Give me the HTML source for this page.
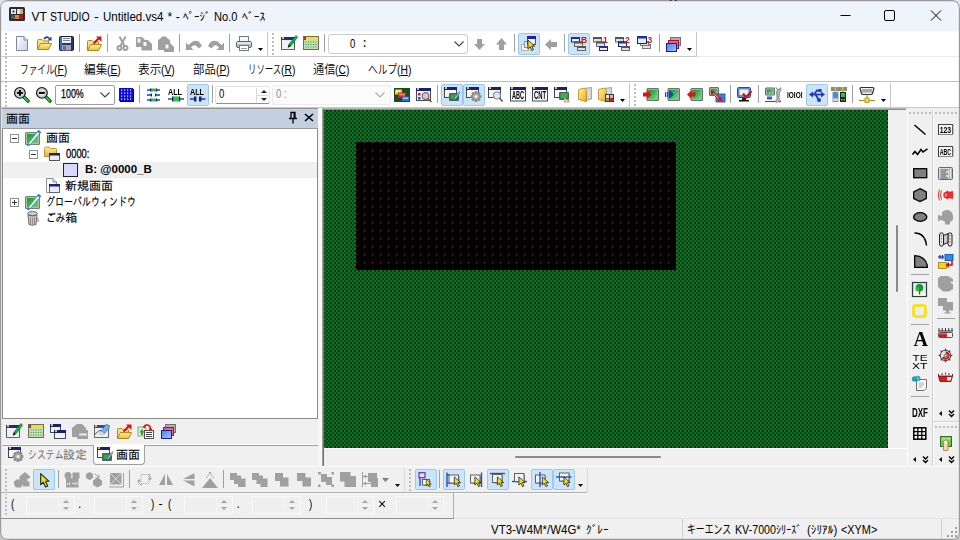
<!DOCTYPE html>
<html lang="ja"><head><meta charset="utf-8"><title>VT STUDIO</title>
<style>
html,body{margin:0;padding:0;}
body{width:960px;height:540px;overflow:hidden;background:#fff;position:relative;font-family:"Liberation Sans","Noto Sans CJK JP",sans-serif;}
#w{position:absolute;left:0;top:0;width:960px;height:540px;overflow:hidden;}
#w div{position:absolute;}
.t{white-space:nowrap;line-height:1;}
.g{white-space:nowrap;line-height:1;font-family:"Liberation Sans","IPAGothic","Noto Sans CJK JP",sans-serif;}
.k{white-space:nowrap;line-height:1;font-family:"Liberation Sans","IPAGothic","Noto Sans CJK JP",sans-serif;-webkit-text-stroke:0.15px currentColor;}
.i{position:absolute;overflow:visible;}
.it{will-change:transform;}
u{text-decoration:underline;text-underline-offset:1px;}
</style></head><body><div id="w">
<div style="left:0px;top:0px;width:960px;height:540px;background:#f0f0f0;"></div>
<div style="left:0px;top:0px;width:960px;height:31px;background:#eff3fb;"></div>
<svg class="i" style="left:9px;top:7px" width="16" height="14" viewBox="0 0 16 14"><rect x="0" y="0" width="16" height="14" rx="1.5" fill="#2c2c2c"/><rect x="2" y="2" width="5" height="5" fill="#e8eef8"/><rect x="3.5" y="3.5" width="2" height="2" fill="#334"/><rect x="8" y="2" width="3" height="5" fill="#d8e8f0"/><rect x="11" y="2" width="3" height="5" fill="#e0a080"/><rect x="2" y="8" width="4" height="4" fill="#5e544c"/><rect x="6" y="8" width="4" height="4" fill="#c88848"/><rect x="10" y="8" width="4" height="4" fill="#b01c1c"/></svg>
<div class="g" style="left:31.5px;top:11px;font-size:12px;color:#000;transform:scaleX(1);transform-origin:0 0;">VT</div>
<div class="g" style="left:49.7px;top:11px;font-size:12px;color:#000;transform:scaleX(0.873);transform-origin:0 0;">STUDIO</div>
<div class="g" style="left:94.4px;top:11px;font-size:12px;color:#000;transform:scaleX(1.2);transform-origin:0 0;">-</div>
<div class="g" style="left:102.6px;top:11px;font-size:12px;color:#000;transform:scaleX(0.965);transform-origin:0 0;">Untitled.vs4</div>
<div class="g" style="left:167.4px;top:11px;font-size:12px;color:#000;transform:scaleX(1);transform-origin:0 0;">*</div>
<div class="g" style="left:175.7px;top:11px;font-size:12px;color:#000;transform:scaleX(1);transform-origin:0 0;">-</div>
<div class="g" style="left:183.2px;top:11px;font-size:12px;color:#000;transform:scaleX(0.91);transform-origin:0 0;">ﾍﾟｰｼﾞ</div>
<div class="g" style="left:214.4px;top:11px;font-size:12px;color:#000;transform:scaleX(0.925);transform-origin:0 0;">No.0</div>
<div class="g" style="left:242.1px;top:11px;font-size:12px;color:#000;transform:scaleX(0.97);transform-origin:0 0;">ﾍﾞｰｽ</div>
<svg class="i" style="left:838px;top:9px" width="110" height="14" viewBox="0 0 110 14"><path d="M2.5 6.5h10" stroke="#000" stroke-width="1" fill="none"/><rect x="46.5" y="1.5" width="10" height="10" rx="1.5" fill="none" stroke="#000" stroke-width="1"/><path d="M93 1.5l10 10M103 1.5l-10 10" stroke="#000" stroke-width="1" fill="none"/></svg>
<div style="left:1px;top:31px;width:958px;height:26px;background:#fff;"></div>
<div style="left:1px;top:56px;width:958px;height:1px;background:#ececec;"></div>
<div style="left:2px;top:56px;width:695px;height:1px;background:#c8c8c8;"></div>
<div style="left:1px;top:57px;width:958px;height:25px;background:#fff;"></div>
<div style="left:1px;top:81px;width:958px;height:1px;background:#c0c0c0;"></div>
<div style="left:1px;top:82px;width:958px;height:26px;background:#fff;"></div>
<div style="left:1px;top:107px;width:958px;height:1px;background:#c8c8c8;"></div>
<div style="left:5px;top:33px;width:2px;height:74px;background-image:repeating-linear-gradient(to bottom,#bdbdbd 0,#bdbdbd 2px,transparent 2px,transparent 4px);"></div>
<svg class="i" style="left:16px;top:36px" width="12" height="15" viewBox="0 0 12 15"><defs><linearGradient id="gnew" x1="0" y1="0" x2="1" y2="1"><stop offset="0" stop-color="#fff"/><stop offset="1" stop-color="#c8d4e8"/></linearGradient></defs><path d="M0.5 0.5H8L11.5 4V14.5H0.5Z" fill="url(#gnew)" stroke="#808898"/><path d="M8 0.5V4H11.5" fill="#e8ecf4" stroke="#808898"/></svg>
<svg class="i" style="left:36px;top:35px" width="16" height="16" viewBox="0 0 16 16"><defs><linearGradient id="gfo1" x1="0" y1="0" x2="0" y2="1"><stop offset="0" stop-color="#fff0a0"/><stop offset="1" stop-color="#f0c030"/></linearGradient></defs><path d="M1.5 14.5V5.5Q1.5 4.5 2.5 4.5H6L7.5 6H12.5V8" fill="#f8e080" stroke="#b08820"/><path d="M1.5 14.5L4.5 8.5H15.5L12.5 14.5Z" fill="url(#gfo1)" stroke="#b08820"/><path d="M8 4Q10.5 0.5 13.5 3.5" fill="none" stroke="#1a3a9c" stroke-width="1.6"/><path d="M11.5 5.5L15.5 5.5L15.5 1.5Z" fill="#1a3a9c"/></svg>
<svg class="i" style="left:59px;top:36px" width="15" height="15" viewBox="0 0 15 15"><rect x="0.5" y="0.5" width="14" height="14" rx="1" fill="#24347c" stroke="#141c54"/><rect x="3" y="1" width="9" height="6" fill="#f0f0f0"/><path d="M4 2.5h7M4 4.5h7" stroke="#888" stroke-width="1"/><rect x="3" y="9" width="9" height="5.5" fill="#a0a4b0"/><rect x="4" y="10" width="3" height="4" fill="#70747c"/><rect x="1" y="1" width="2" height="13" fill="#4a6ab8"/></svg>
<div style="left:79px;top:34px;width:1px;height:18px;background:#a0a0a0;"></div>
<svg class="i" style="left:86px;top:36px" width="16" height="16" viewBox="0 0 16 16"><defs><linearGradient id="gfo2" x1="0" y1="0" x2="0" y2="1"><stop offset="0" stop-color="#fff0a0"/><stop offset="1" stop-color="#f0c030"/></linearGradient></defs><path d="M1.5 14.5V5.5Q1.5 4.5 2.5 4.5H6L7.5 6H12.5V8" fill="#f8e080" stroke="#b08820"/><path d="M1.5 14.5L4.5 8.5H15.5L12.5 14.5Z" fill="url(#gfo2)" stroke="#b08820"/><path d="M7.5 7.5L13 2" stroke="#e01010" stroke-width="2.2"/><path d="M10 0.5H15.5V6Z" fill="#e01010"/></svg>
<div style="left:107px;top:34px;width:1px;height:18px;background:#a0a0a0;"></div>
<svg class="i" style="left:117px;top:36px" width="11" height="15" viewBox="0 0 11 15"><g fill="none" stroke="#a0a0a0" stroke-width="2"><path d="M2.5 0.5L7.5 10M8.5 0.5L3.5 10"/><circle cx="2.5" cy="12" r="2"/><circle cx="8.5" cy="12" r="2"/></g></svg>
<svg class="i" style="left:136px;top:37px" width="16" height="14" viewBox="0 0 16 14"><path d="M0 0H6L9 3V10H0Z" fill="#a0a0a0"/><path d="M1.500 1.500H4.500V5.500H1.500Z" fill="#f4f4f4"/><path d="M5.500 3H12L16 7V13.500H5.500Z" fill="#a0a0a0"/><path d="M7.500 5H10.500V9H7.500Z" fill="#f4f4f4"/></svg>
<svg class="i" style="left:158px;top:36px" width="16" height="16" viewBox="0 0 16 16"><path d="M0 5Q0 3 2 3L4 0.5H8L10 3Q12 3 12 5V14H0Z" fill="#a0a0a0"/><path d="M6 7H12L16 11V16H6Z" fill="#a0a0a0"/><path d="M7.500 8.500H10.5V12.500H7.500Z" fill="#f4f4f4"/></svg>
<div style="left:179px;top:34px;width:1px;height:18px;background:#a0a0a0;"></div>
<svg class="i" style="left:186px;top:39px" width="16" height="11" viewBox="0 0 16 11"><path d="M0 3.500V11H7.5L5 8.500Q9 3.500 12.500 9.500L16 7Q11 -3 2.500 6Z" fill="#a0a0a0"/></svg>
<svg class="i" style="left:208px;top:39px" width="16" height="11" viewBox="0 0 16 11"><path d="M16 3.500V11H8.5L11 8.500Q7 3.500 3.500 9.500L0 7Q5 -3 13.500 6Z" fill="#a0a0a0"/></svg>
<div style="left:229px;top:34px;width:1px;height:18px;background:#a0a0a0;"></div>
<svg class="i" style="left:236px;top:36px" width="16" height="15" viewBox="0 0 16 15"><rect x="3.500" y="0.500" width="9" height="5" fill="#f4f6f8" stroke="#707880"/><rect x="0.500" y="5.500" width="15" height="6" rx="1.5" fill="#b8c4d0" stroke="#58626c"/><rect x="1" y="6" width="14" height="2" fill="#dce4ec"/><rect x="3.500" y="9.500" width="9" height="5" fill="#fff" stroke="#707880"/><path d="M5 12.500h6" stroke="#99a" stroke-width="1"/></svg>
<svg class="i" style="left:258px;top:48px" width="5" height="3" viewBox="0 0 5 3"><path d="M0 0h5L2.5 3z" fill="#000"/></svg>
<div style="left:267px;top:32px;width:1px;height:24px;background:#c8c8c8;"></div>
<div style="left:272px;top:33px;width:2px;height:22px;background-image:repeating-linear-gradient(to bottom,#bdbdbd 0,#bdbdbd 2px,transparent 2px,transparent 4px);"></div>
<svg class="i" style="left:281px;top:36px" width="16" height="14" viewBox="0 0 16 14"><rect x="0.5" y="1.5" width="13" height="12" fill="#eef0f4" stroke="#505868"/><rect x="0" y="1" width="14" height="3" fill="#1c2c8c"/><rect x="1" y="1" width="2" height="2" fill="#e8c040"/><rect x="0" y="13" width="14" height="1" fill="#606470"/><path d="M15 -0.500L16.500 1.200L10 9.800L7.600 11L8 8.300Z" fill="#18b040" stroke="#0a6a20" stroke-width="0.700"/><path d="M6.600 12L9.600 9.900L8 8.300Z" fill="#111"/></svg>
<svg class="i" style="left:303px;top:36px" width="16" height="14" viewBox="0 0 16 14"><rect x="0.500" y="0.500" width="15" height="13" fill="#c4dcb4" stroke="#6c6c58"/><rect x="1" y="1" width="14" height="3" fill="#f8e020"/><rect x="1" y="1" width="2" height="3" fill="#d02020"/><g fill="#3c8c3c"><rect x="2.500" y="5.500" width="1" height="1"/><rect x="5" y="5.500" width="1" height="1"/><rect x="7.500" y="5.500" width="1" height="1"/><rect x="10" y="5.500" width="1" height="1"/><rect x="12.500" y="5.500" width="1" height="1"/><rect x="2.500" y="8" width="1" height="1"/><rect x="5" y="8" width="1" height="1"/><rect x="7.500" y="8" width="1" height="1"/><rect x="10" y="8" width="1" height="1"/><rect x="12.500" y="8" width="1" height="1"/><rect x="2.500" y="10.500" width="1" height="1"/><rect x="5" y="10.500" width="1" height="1"/><rect x="7.500" y="10.500" width="1" height="1"/><rect x="10" y="10.500" width="1" height="1"/><rect x="12.500" y="10.500" width="1" height="1"/></g></svg>
<div style="left:324px;top:34px;width:1px;height:18px;background:#a0a0a0;"></div>
<div style="left:328px;top:34px;width:140px;height:20px;background:#fff;border:1px solid #cdcdcd;box-sizing:border-box;border-radius:3px;"></div>
<div class="t" style="left:349.5px;top:38px;font-size:12px;color:#000;transform:scaleX(0.8);transform-origin:0 0;">0</div>
<div class="t" style="left:362.5px;top:37px;font-size:12px;color:#000;transform:scaleX(0.8);transform-origin:0 0;font-weight:bold;">:</div>
<svg class="i" style="left:454px;top:41px" width="10" height="6" viewBox="0 0 10 6"><path d="M0.5 0.5L5 5l4.5-4.5" fill="none" stroke="#444" stroke-width="1.1"/></svg>
<svg class="i" style="left:474px;top:39px" width="11" height="11" viewBox="0 0 11 11"><path d="M3 0H8V5H11L5.500 11L0 5H3Z" fill="#a0a0a0"/></svg>
<svg class="i" style="left:496px;top:38px" width="11" height="12" viewBox="0 0 11 12"><path d="M3 12H8V6.500H11L5.500 0L0 6.500H3Z" fill="#a0a0a0"/></svg>
<div style="left:514px;top:34px;width:1px;height:18px;background:#a0a0a0;"></div>
<div style="left:518px;top:33px;width:22px;height:22px;background:#cce4f7;border:1px solid #99c9ef;box-sizing:border-box;border-radius:2px;"></div>
<svg class="i" style="left:521px;top:36px" width="16" height="15" viewBox="0 0 16 15"><rect x="0.500" y="8.500" width="7" height="6" fill="#f4f4f4" stroke="#b0b0b0"/><rect x="3.500" y="5.500" width="7" height="6" fill="#e8e8f0" stroke="#8890a8"/><rect x="6.5" y="0.5" width="8" height="8" fill="#f4f6fa" stroke="#505868"/><rect x="6" y="0" width="9" height="3" fill="#1828a0"/><g transform="translate(6.5,3.5) scale(0.85)"><path d="M0.500 0.500V11L3 8.500L5 13L7 12L5 7.800H8.500Z" fill="#f0e020" stroke="#222" stroke-width="1" stroke-linejoin="round"/></g></svg>
<svg class="i" style="left:545px;top:39px" width="12" height="11" viewBox="0 0 12 11"><path d="M12 3V8H6V11L0 5.500L6 0V3Z" fill="#a0a0a0"/></svg>
<div style="left:564px;top:34px;width:1px;height:18px;background:#a0a0a0;"></div>
<div style="left:568px;top:33px;width:22px;height:22px;background:#cce4f7;border:1px solid #99c9ef;box-sizing:border-box;border-radius:2px;"></div>
<svg class="i it" style="left:571px;top:36px" width="16" height="15" viewBox="0 0 16 15"><rect x="0.5" y="1.5" width="8" height="4.5" fill="#f0f0f4" stroke="#182060"/><rect x="0" y="1" width="9" height="2" fill="#1830a8"/><rect x="3.5" y="6.0" width="8" height="4.5" fill="#e0e0e0" stroke="#666"/><rect x="3" y="5.5" width="9" height="2" fill="#555"/><rect x="6.5" y="10.5" width="8" height="4" fill="#e0e0e0" stroke="#666"/><rect x="6" y="10" width="9" height="2" fill="#555"/><text x="10" y="6.500" font-family="Liberation Sans,sans-serif" font-weight="bold" font-size="8.500" fill="#c81818">B</text></svg>
<svg class="i it" style="left:593px;top:36px" width="16" height="15" viewBox="0 0 16 15"><rect x="0.5" y="1.5" width="8" height="4.5" fill="#e0e0e0" stroke="#666"/><rect x="0" y="1" width="9" height="2" fill="#555"/><rect x="3.5" y="6.0" width="8" height="4.5" fill="#e0e0e0" stroke="#666"/><rect x="3" y="5.5" width="9" height="2" fill="#555"/><rect x="6.5" y="10.5" width="8" height="4" fill="#f0f0f4" stroke="#182060"/><rect x="6" y="10" width="9" height="2" fill="#1830a8"/><text x="10" y="6.500" font-family="Liberation Sans,sans-serif" font-weight="bold" font-size="8.500" fill="#c81818">1</text></svg>
<svg class="i it" style="left:615px;top:36px" width="16" height="15" viewBox="0 0 16 15"><rect x="0.5" y="1.5" width="8" height="4.5" fill="#e0e0e0" stroke="#666"/><rect x="0" y="1" width="9" height="2" fill="#555"/><rect x="3.5" y="6.0" width="8" height="4.5" fill="#f0f0f4" stroke="#182060"/><rect x="3" y="5.5" width="9" height="2" fill="#1830a8"/><rect x="6.5" y="10.5" width="8" height="4" fill="#e0e0e0" stroke="#666"/><rect x="6" y="10" width="9" height="2" fill="#555"/><text x="10" y="6.500" font-family="Liberation Sans,sans-serif" font-weight="bold" font-size="8.500" fill="#c81818">2</text></svg>
<svg class="i it" style="left:637px;top:36px" width="16" height="15" viewBox="0 0 16 15"><rect x="5.5" y="8.5" width="8" height="4" fill="#e4e4e4" stroke="#777"/><rect x="5" y="8" width="9" height="2" fill="#777"/><rect x="3.5" y="5.5" width="8" height="4" fill="#e4e4e4" stroke="#777"/><rect x="3" y="5" width="9" height="2" fill="#777"/><rect x="0.5" y="0.5" width="9" height="7" fill="#e8ecf4" stroke="#182060"/><rect x="0" y="0" width="10" height="2.5" fill="#1830a8"/><text x="10.500" y="7" font-family="Liberation Sans,sans-serif" font-weight="bold" font-size="8.500" fill="#c81818">3</text></svg>
<div style="left:659px;top:34px;width:1px;height:18px;background:#a0a0a0;"></div>
<svg class="i" style="left:666px;top:37px" width="15" height="15" viewBox="0 0 15 15"><rect x="4.500" y="0.500" width="10" height="8" fill="#b0b0b0" stroke="#707070"/><rect x="2.500" y="3.500" width="10" height="8" fill="#f06080" stroke="#a01030"/><defs><linearGradient id="gst" x1="0" y1="0" x2="1" y2="1"><stop offset="0" stop-color="#4880f0"/><stop offset="1" stop-color="#a8c8ff"/></linearGradient></defs><rect x="0.500" y="6.500" width="10" height="8" fill="url(#gst)" stroke="#1020a0"/></svg>
<svg class="i" style="left:687px;top:48px" width="5" height="3" viewBox="0 0 5 3"><path d="M0 0h5L2.5 3z" fill="#000"/></svg>
<div style="left:696px;top:32px;width:1px;height:24px;background:#c8c8c8;"></div>
<div class="t" style="left:19.5px;top:63.5px;font-size:12px;color:#000;font-weight:350;"><span style="display:inline-block;transform:scaleX(0.72);transform-origin:0 50%;margin-right:-13.44px">ファイル</span></div>
<div class="t" style="left:54px;top:63.5px;font-size:12px;color:#000;transform:scaleX(0.86);transform-origin:0 0;">(<u>F</u>)</div>
<div class="t" style="left:83.5px;top:63.5px;font-size:12px;color:#000;font-weight:350;"><span style="display:inline-block;transform:scaleX(0.97);transform-origin:0 50%;margin-right:-0.72px">編集</span></div>
<div class="t" style="left:107px;top:63.5px;font-size:12px;color:#000;transform:scaleX(0.86);transform-origin:0 0;">(<u>E</u>)</div>
<div class="t" style="left:137.5px;top:63.5px;font-size:12px;color:#000;font-weight:350;"><span style="display:inline-block;transform:scaleX(0.97);transform-origin:0 50%;margin-right:-0.72px">表示</span></div>
<div class="t" style="left:161px;top:63.5px;font-size:12px;color:#000;transform:scaleX(0.86);transform-origin:0 0;">(<u>V</u>)</div>
<div class="t" style="left:193px;top:63.5px;font-size:12px;color:#000;font-weight:350;"><span style="display:inline-block;transform:scaleX(0.95);transform-origin:0 50%;margin-right:-1.20px">部品</span></div>
<div class="t" style="left:216px;top:63.5px;font-size:12px;color:#000;transform:scaleX(0.86);transform-origin:0 0;">(<u>P</u>)</div>
<div class="t" style="left:247.5px;top:63.5px;font-size:12px;color:#000;font-weight:350;"><span style="display:inline-block;transform:scaleX(0.7);transform-origin:0 50%;margin-right:-14.40px">リソース</span></div>
<div class="t" style="left:281px;top:63.5px;font-size:12px;color:#000;transform:scaleX(0.86);transform-origin:0 0;">(<u>R</u>)</div>
<div class="t" style="left:312.5px;top:63.5px;font-size:12px;color:#000;font-weight:350;"><span style="display:inline-block;transform:scaleX(0.93);transform-origin:0 50%;margin-right:-1.68px">通信</span></div>
<div class="t" style="left:335px;top:63.5px;font-size:12px;color:#000;transform:scaleX(0.86);transform-origin:0 0;">(<u>C</u>)</div>
<div class="t" style="left:367.5px;top:63.5px;font-size:12px;color:#000;font-weight:350;"><span style="display:inline-block;transform:scaleX(0.81);transform-origin:0 50%;margin-right:-6.84px">ヘルプ</span></div>
<div class="t" style="left:397px;top:63.5px;font-size:12px;color:#000;transform:scaleX(0.86);transform-origin:0 0;">(<u>H</u>)</div>
<svg class="i" style="left:14px;top:87px" width="15" height="15" viewBox="0 0 15 15"><path d="M10 10L14 14" stroke="#0a5a14" stroke-width="3.600" stroke-linecap="round"/><path d="M10.300 10.300L13.800 13.800" stroke="#30c848" stroke-width="1.800" stroke-linecap="round"/><circle cx="5.900" cy="5.900" r="5.300" fill="#e0e2e4" stroke="#181818" stroke-width="1.300"/><circle cx="5.900" cy="5.900" r="4" fill="none" stroke="#b8bcc0" stroke-width="0.800"/><path d="M3 5.900h5.800" stroke="#000" stroke-width="2"/><path d="M5.900 3v5.800" stroke="#000" stroke-width="2"/></svg>
<svg class="i" style="left:36px;top:87px" width="15" height="15" viewBox="0 0 15 15"><path d="M10 10L14 14" stroke="#0a5a14" stroke-width="3.600" stroke-linecap="round"/><path d="M10.300 10.300L13.800 13.800" stroke="#30c848" stroke-width="1.800" stroke-linecap="round"/><circle cx="5.900" cy="5.900" r="5.300" fill="#e0e2e4" stroke="#181818" stroke-width="1.300"/><circle cx="5.900" cy="5.900" r="4" fill="none" stroke="#b8bcc0" stroke-width="0.800"/><path d="M3 5.900h5.800" stroke="#000" stroke-width="2"/></svg>
<div style="left:55px;top:85px;width:60px;height:20px;background:#fff;border:1px solid #9c9c9c;box-sizing:border-box;border-radius:2px;"></div>
<div class="t" style="left:60.5px;top:88px;font-size:12px;color:#000;transform:scaleX(0.74);transform-origin:0 0;-webkit-text-stroke:0.25px #000;">100%</div>
<svg class="i" style="left:100px;top:92px" width="10" height="6" viewBox="0 0 10 6"><path d="M0.5 0.5L5 5l4.5-4.5" fill="none" stroke="#444" stroke-width="1.1"/></svg>
<svg class="i" style="left:119px;top:88px" width="15" height="14" viewBox="0 0 15 14"><rect x="1" y="1" width="14" height="13" fill="#000"/><rect x="0" y="0" width="14" height="13" fill="#0808e8"/><rect x="2" y="1.5" width="1.200" height="1.200" fill="#fff"/><rect x="2" y="4.5" width="1.200" height="1.200" fill="#fff"/><rect x="2" y="7.5" width="1.200" height="1.200" fill="#fff"/><rect x="2" y="10.5" width="1.200" height="1.200" fill="#fff"/><rect x="5" y="1.5" width="1.200" height="1.200" fill="#fff"/><rect x="5" y="4.5" width="1.200" height="1.200" fill="#fff"/><rect x="5" y="7.5" width="1.200" height="1.200" fill="#fff"/><rect x="5" y="10.5" width="1.200" height="1.200" fill="#fff"/><rect x="8" y="1.5" width="1.200" height="1.200" fill="#fff"/><rect x="8" y="4.5" width="1.200" height="1.200" fill="#fff"/><rect x="8" y="7.5" width="1.200" height="1.200" fill="#fff"/><rect x="8" y="10.5" width="1.200" height="1.200" fill="#fff"/><rect x="11" y="1.5" width="1.200" height="1.200" fill="#fff"/><rect x="11" y="4.5" width="1.200" height="1.200" fill="#fff"/><rect x="11" y="7.5" width="1.200" height="1.200" fill="#fff"/><rect x="11" y="10.5" width="1.200" height="1.200" fill="#fff"/></svg>
<div style="left:139px;top:85px;width:1px;height:18px;background:#a0a0a0;"></div>
<svg class="i" style="left:147px;top:88px" width="13" height="14" viewBox="0 0 13 14"><path d="M0 2.0H13" stroke="#1838c0" stroke-width="1.400"/><rect x="4" y="0.5" width="5" height="3" fill="#30c050"/><rect x="3" y="0.5" width="1.200" height="3" fill="#102080"/><rect x="9" y="0.5" width="1.200" height="3" fill="#102080"/><path d="M0 12.0H13" stroke="#1838c0" stroke-width="1.400"/><rect x="4" y="10.5" width="5" height="3" fill="#30c050"/><rect x="3" y="10.5" width="1.200" height="3" fill="#102080"/><rect x="9" y="10.5" width="1.200" height="3" fill="#102080"/><path d="M0 7H4.500M8.500 7H13" stroke="#1838c0" stroke-width="1.400"/><rect x="3.800" y="5.500" width="1.200" height="3" fill="#102080"/><rect x="8" y="5.500" width="1.200" height="3" fill="#102080"/></svg>
<svg class="i it" style="left:168px;top:88px" width="16" height="14" viewBox="0 0 16 14"><text x="0" y="6.500" font-family="Liberation Sans,sans-serif" font-weight="bold" font-size="9" textLength="14" lengthAdjust="spacingAndGlyphs" fill="#000">ALL</text><path d="M0 11.0H16" stroke="#1838c0" stroke-width="1.400"/><rect x="5" y="8.5" width="6" height="5" fill="#30c050"/><rect x="4" y="8.5" width="1.200" height="5" fill="#102080"/><rect x="11" y="8.5" width="1.200" height="5" fill="#102080"/></svg>
<div style="left:187px;top:84px;width:22px;height:22px;background:#cce4f7;border:1px solid #99c9ef;box-sizing:border-box;border-radius:2px;"></div>
<svg class="i it" style="left:190px;top:88px" width="16" height="14" viewBox="0 0 16 14"><text x="0" y="6.500" font-family="Liberation Sans,sans-serif" font-weight="bold" font-size="9" textLength="14" lengthAdjust="spacingAndGlyphs" fill="#000">ALL</text><path d="M0 11H6M9.500 11H15.500" stroke="#1838c0" stroke-width="1.400"/><rect x="4" y="8.500" width="2.400" height="5" fill="#102080"/><rect x="9" y="8.500" width="2.400" height="5" fill="#102080"/></svg>
<div style="left:212px;top:85px;width:1px;height:18px;background:#a0a0a0;"></div>
<div style="left:215px;top:86px;width:55px;height:18px;background:#fff;border:1px solid #e4e4e4;border-bottom-color:#909090;box-sizing:border-box;border-radius:2px;"></div>
<div style="left:256px;top:88px;width:1px;height:14px;background:#d8d8d8;"></div>
<div style="left:257px;top:95px;width:11px;height:1px;background:#d8d8d8;"></div>
<svg class="i" style="left:261px;top:90px" width="6" height="3" viewBox="0 0 6 3"><path d="M0 3h6L3 0z" fill="#222"/></svg>
<svg class="i" style="left:261px;top:98px" width="6" height="3" viewBox="0 0 6 3"><path d="M0 0h6L3 3z" fill="#222"/></svg>
<div class="t" style="left:218.5px;top:88px;font-size:12px;color:#000;transform:scaleX(0.8);transform-origin:0 0;">0</div>
<div style="left:272px;top:85px;width:119px;height:20px;background:#fbfbfb;border:1px solid #ececec;box-sizing:border-box;border-radius:2px;"></div>
<div class="t" style="left:276px;top:88px;font-size:12px;color:#8a8a8a;transform:scaleX(0.8);transform-origin:0 0;">0 :</div>
<svg class="i" style="left:375px;top:92px" width="10" height="6" viewBox="0 0 10 6"><path d="M0.5 0.5L5 5l4.5-4.5" fill="none" stroke="#aaa" stroke-width="1.1"/></svg>
<svg class="i" style="left:394px;top:88px" width="16" height="14" viewBox="0 0 16 14"><rect x="0" y="0" width="16" height="14" fill="#1c4c1c"/><rect x="1" y="1.500" width="7" height="5" fill="#e8d830"/><rect x="4" y="4.500" width="8" height="5.500" fill="#d82020"/><rect x="8" y="8.500" width="7" height="4.500" fill="#3070e0"/><rect x="5" y="5.500" width="6" height="2" fill="#f08080"/><rect x="9" y="9.500" width="5" height="1.500" fill="#a0c8ff"/><rect x="2" y="2.500" width="4" height="1.500" fill="#fff8a0"/></svg>
<svg class="i" style="left:416px;top:88px" width="16" height="14" viewBox="0 0 16 14"><rect x="0.5" y="0.5" width="14" height="12" fill="#f4f4f8" stroke="#404858"/><rect x="0" y="0" width="15" height="3" fill="#18207c"/><rect x="1" y="0" width="2" height="2" fill="#e8c040"/><rect x="2" y="5" width="2.500" height="2.500" fill="#d02020"/><rect x="2" y="9" width="2.500" height="2.500" fill="#2050d0"/><circle cx="9.500" cy="8" r="3.300" fill="#e0c8c8" stroke="#707078" stroke-width="1.200"/><path d="M12 10.500L15.500 14" stroke="#805040" stroke-width="1.600"/></svg>
<div style="left:437px;top:85px;width:1px;height:18px;background:#a0a0a0;"></div>
<div style="left:441px;top:84px;width:22px;height:22px;background:#cce4f7;border:1px solid #99c9ef;box-sizing:border-box;border-radius:2px;"></div>
<svg class="i" style="left:444px;top:87px" width="16" height="15" viewBox="0 0 16 15"><rect x="0.5" y="0.5" width="12" height="10" fill="#f8f8fa" stroke="#404858"/><rect x="0" y="0" width="13" height="3" fill="#18207c"/><rect x="1" y="0" width="2" height="2" fill="#e8c040"/><rect x="5" y="6" width="10" height="8" rx="1" fill="#585c60"/><rect x="6.500" y="7.500" width="6" height="4.500" fill="#20b040"/><path d="M15.500 4.500L16 6L11.500 12L10 12.500L10.500 11Z" fill="#c8e0f8" stroke="#3060a0" stroke-width="0.600"/></svg>
<div style="left:463px;top:84px;width:22px;height:22px;background:#cce4f7;border:1px solid #99c9ef;box-sizing:border-box;border-radius:2px;"></div>
<svg class="i" style="left:466px;top:87px" width="16" height="15" viewBox="0 0 16 15"><rect x="0.5" y="0.5" width="12" height="10" fill="#f8f8fa" stroke="#404858"/><rect x="0" y="0" width="13" height="3" fill="#18207c"/><rect x="1" y="0" width="2" height="2" fill="#e8c040"/><g transform="translate(10,9.500)"><g fill="#909090"><rect x="-1.300" y="-5.500" width="2.600" height="11" transform="rotate(0)"/><rect x="-1.300" y="-5.500" width="2.600" height="11" transform="rotate(45)"/><rect x="-1.300" y="-5.500" width="2.600" height="11" transform="rotate(90)"/><rect x="-1.300" y="-5.500" width="2.600" height="11" transform="rotate(135)"/></g><circle r="4" fill="#a8a8a8" stroke="#787878" stroke-width="0.800"/><circle r="1.500" fill="#f0f0f0"/></g></svg>
<svg class="i" style="left:488px;top:87px" width="16" height="15" viewBox="0 0 16 15"><rect x="0.5" y="0.5" width="12" height="10" fill="#f8f8fa" stroke="#404858"/><rect x="0" y="0" width="13" height="3" fill="#18207c"/><rect x="1" y="0" width="2" height="2" fill="#e8c040"/><circle cx="9" cy="8.500" r="3.500" fill="#d8e8f8" stroke="#8090a0" stroke-width="1.200"/><path d="M11.500 11L14.500 14.500" stroke="#805030" stroke-width="1.600"/></svg>
<svg class="i it" style="left:510px;top:87px" width="16" height="15" viewBox="0 0 16 15"><rect x="0.5" y="0.5" width="15" height="13.5" fill="#f8f8fa" stroke="#404858"/><rect x="0" y="0" width="16" height="3" fill="#18207c"/><rect x="1" y="0" width="2" height="2" fill="#e8c040"/><text x="2" y="12.300" font-family="Liberation Sans,sans-serif" font-weight="bold" font-size="11" textLength="12" lengthAdjust="spacingAndGlyphs" fill="#000">ABC</text></svg>
<svg class="i it" style="left:532px;top:87px" width="16" height="15" viewBox="0 0 16 15"><rect x="0.5" y="0.5" width="15" height="13.5" fill="#f8f8fa" stroke="#404858"/><rect x="0" y="0" width="16" height="3" fill="#18207c"/><rect x="1" y="0" width="2" height="2" fill="#e8c040"/><text x="2" y="12.300" font-family="Liberation Sans,sans-serif" font-weight="bold" font-size="11" textLength="12" lengthAdjust="spacingAndGlyphs" fill="#000">CNT</text></svg>
<svg class="i" style="left:554px;top:87px" width="16" height="15" viewBox="0 0 16 15"><rect x="0.5" y="0.5" width="12" height="10" fill="#f8f8fa" stroke="#404858"/><rect x="0" y="0" width="13" height="3" fill="#18207c"/><rect x="1" y="0" width="2" height="2" fill="#e8c040"/><rect x="5" y="5" width="10" height="8" rx="1" fill="#585c60"/><rect x="6.500" y="6.200" width="7" height="5" fill="#20c040"/><path d="M10 15V12L11.500 9.500V12L15 13V15Z" fill="#f8d8b0" stroke="#a07040" stroke-width="0.600"/></svg>
<svg class="i" style="left:578px;top:87px" width="14" height="15" viewBox="0 0 14 15"><defs><linearGradient id="gbk" x1="0" y1="0" x2="1" y2="1"><stop offset="0" stop-color="#fff4a0"/><stop offset="1" stop-color="#e8a820"/></linearGradient></defs><path d="M6 1.500L13.500 0.500V12L6 14Z" fill="#d8d8d8" stroke="#909090" stroke-width="0.800"/><path d="M0.500 2.500L6.500 1L8.500 3.500V14.500L6 14L0.500 12.500Z" fill="url(#gbk)" stroke="#b88818" stroke-width="0.800"/></svg>
<svg class="i" style="left:598px;top:87px" width="16" height="15" viewBox="0 0 16 15"><defs><linearGradient id="gbk2" x1="0" y1="0" x2="1" y2="1"><stop offset="0" stop-color="#fff4a0"/><stop offset="1" stop-color="#e8a820"/></linearGradient></defs><path d="M6 1.500L13.500 0.500V12L6 14Z" fill="#d8d8d8" stroke="#909090" stroke-width="0.800"/><path d="M0.500 2.500L6.500 1L8.500 3.500V14.500L6 14L0.500 12.500Z" fill="url(#gbk2)" stroke="#b88818" stroke-width="0.800"/><rect x="7" y="7" width="9" height="8" fill="#3a3a3a"/><rect x="8" y="8" width="3" height="3" fill="#e0e8f0"/><rect x="12" y="8" width="3" height="3" fill="#e0b0a0"/><rect x="8" y="11.500" width="3" height="2.500" fill="#c09050"/><rect x="12" y="11.500" width="3" height="2.500" fill="#d02020"/></svg>
<svg class="i" style="left:620px;top:99px" width="5" height="3" viewBox="0 0 5 3"><path d="M0 0h5L2.5 3z" fill="#000"/></svg>
<div style="left:629px;top:83px;width:1px;height:24px;background:#c8c8c8;"></div>
<div style="left:634px;top:84px;width:2px;height:22px;background-image:repeating-linear-gradient(to bottom,#bdbdbd 0,#bdbdbd 2px,transparent 2px,transparent 4px);"></div>
<svg class="i" style="left:643px;top:88px" width="16" height="13" viewBox="0 0 16 13"><rect x="3.5" y="0" width="12.5" height="13" rx="1.500" fill="#585c5c"/><rect x="4.3" y="0.8" width="10.9" height="11.4" rx="1" fill="#a8acac"/><defs><linearGradient id="gm350" x1="0" y1="0" x2="1" y2="1"><stop offset="0" stop-color="#109030"/><stop offset="1" stop-color="#70e080"/></linearGradient></defs><rect x="5.5" y="2" width="8.5" height="9" fill="url(#gm350)"/><path d="M0 4.500H4V2L8.500 6.500L4 11V8.500H0Z" fill="#e81010"/></svg>
<svg class="i" style="left:665px;top:88px" width="15" height="13" viewBox="0 0 15 13"><rect x="2.5" y="0" width="12.5" height="13" rx="1.500" fill="#585c5c"/><rect x="3.3" y="0.8" width="10.9" height="11.4" rx="1" fill="#a8acac"/><defs><linearGradient id="gm250" x1="0" y1="0" x2="1" y2="1"><stop offset="0" stop-color="#109030"/><stop offset="1" stop-color="#70e080"/></linearGradient></defs><rect x="4.5" y="2" width="8.5" height="9" fill="url(#gm250)"/><path d="M4 2L9 6.500L4 11Z" fill="#1040d8"/><rect x="0" y="4" width="1.200" height="5" fill="#1040d8"/><rect x="2" y="4" width="1.200" height="5" fill="#1040d8"/></svg>
<svg class="i" style="left:687px;top:88px" width="16" height="13" viewBox="0 0 16 13"><rect x="3.5" y="0" width="12.5" height="13" rx="1.500" fill="#585c5c"/><rect x="4.3" y="0.8" width="10.9" height="11.4" rx="1" fill="#a8acac"/><defs><linearGradient id="gm350" x1="0" y1="0" x2="1" y2="1"><stop offset="0" stop-color="#109030"/><stop offset="1" stop-color="#70e080"/></linearGradient></defs><rect x="5.5" y="2" width="8.5" height="9" fill="url(#gm350)"/><path d="M8.500 4.500H4.500V2L0 6.500L4.500 11V8.500H8.500Z" fill="#e81010"/></svg>
<svg class="i" style="left:709px;top:87px" width="16" height="15" viewBox="0 0 16 15"><rect x="0" y="0" width="10" height="9" rx="1.500" fill="#585c5c"/><rect x="0.8" y="0.8" width="8.4" height="7.4" rx="1" fill="#a8acac"/><defs><linearGradient id="gm00" x1="0" y1="0" x2="1" y2="1"><stop offset="0" stop-color="#109030"/><stop offset="1" stop-color="#70e080"/></linearGradient></defs><rect x="2" y="2" width="6" height="5" fill="url(#gm00)"/><rect x="7" y="7" width="9" height="8" fill="#4080e0" stroke="#2040a0" stroke-width="0.800"/><path d="M3 5L12 13" stroke="#d81010" stroke-width="2.400"/><path d="M1.500 3.500L6.500 4.500L2.500 8.500Z" fill="#d81010"/><path d="M13.500 14.500L8.500 13.500L12.500 9.500Z" fill="#d81010"/><path d="M4.500 6.500l5 4.500" stroke="#fff" stroke-width="0.800"/></svg>
<div style="left:730px;top:85px;width:1px;height:18px;background:#a0a0a0;"></div>
<svg class="i" style="left:737px;top:87px" width="15" height="15" viewBox="0 0 15 15"><rect x="0.500" y="0.500" width="13" height="10" rx="1" fill="#5888e0" stroke="#2848a0"/><rect x="2.500" y="2.500" width="9" height="5.500" fill="#f0f4fc"/><rect x="5" y="11" width="4" height="2" fill="#222"/><rect x="2" y="13" width="10" height="1.500" fill="#111"/><path d="M6 6.500L9 10.500L14.500 4" fill="none" stroke="#d81010" stroke-width="2.200"/></svg>
<div style="left:758px;top:85px;width:1px;height:18px;background:#a0a0a0;"></div>
<svg class="i" style="left:765px;top:87px" width="16" height="16" viewBox="0 0 16 16"><rect x="0" y="0.5" width="10" height="8" rx="1.500" fill="#585c5c"/><rect x="0.8" y="1.3" width="8.4" height="6.4" rx="1" fill="#a8acac"/><defs><linearGradient id="gm05" x1="0" y1="0" x2="1" y2="1"><stop offset="0" stop-color="#109030"/><stop offset="1" stop-color="#70e080"/></linearGradient></defs><rect x="2" y="2.5" width="6" height="4" fill="url(#gm05)"/><rect x="2" y="9.500" width="5" height="3" fill="#3060c0"/><path d="M0 14.500H16" stroke="#2050b0" stroke-width="1"/><path d="M11 0.500L12.500 3L11.500 5L12 12L10 14.500L11.500 15.500L13.500 14.500L15 15.500L15.500 13.500L14 12L14.500 5L16 3L15.500 0.500L14 2.500L12.500 2.500Z" fill="#b0b4b8" stroke="#70747c" stroke-width="0.700"/></svg>
<svg class="i it" style="left:787px;top:87px" width="16" height="14" viewBox="0 0 16 14"><text x="0" y="11" font-family="Liberation Sans,sans-serif" font-weight="bold" font-size="8.500" textLength="15.500" lengthAdjust="spacingAndGlyphs" fill="#000">IOIOI</text></svg>
<div style="left:806px;top:84px;width:22px;height:22px;background:#cce4f7;border:1px solid #99c9ef;box-sizing:border-box;border-radius:2px;"></div>
<svg class="i" style="left:809px;top:88px" width="16" height="14" viewBox="0 0 16 14"><g fill="none" stroke="#2038c8" stroke-width="1.800"><path d="M1.500 6.500H14"/><path d="M5 6.500L8 2.500H10.500"/><path d="M6.500 6.500L9.500 11.500"/></g><path d="M0 6.500L4 3.500V9.500Z" fill="#2038c8"/><path d="M16 6.500L12 3.500V9.500Z" fill="#2038c8"/><rect x="9.500" y="1" width="3" height="3" fill="#2038c8"/><circle cx="10" cy="12" r="2" fill="#2038c8"/></svg>
<svg class="i" style="left:831px;top:87px" width="16" height="15" viewBox="0 0 16 15"><path d="M0 1H16M0 3H16" stroke="#111" stroke-width="1"/><rect x="3.500" y="0" width="2" height="5" fill="#c8c020"/><rect x="10.500" y="0" width="2" height="5" fill="#c8c020"/><rect x="1.500" y="5" width="6" height="10" fill="#8090a0"/><rect x="2.500" y="6" width="4" height="4" fill="#3090f0"/><rect x="2" y="11.500" width="5" height="2.500" fill="#d0d8e0"/><rect x="9" y="5" width="6" height="10" fill="#202420"/><rect x="10" y="6" width="4" height="4" fill="#30c040"/><rect x="10" y="12" width="1.500" height="1.500" fill="#e0a030"/><rect x="12.500" y="12" width="1.500" height="1.500" fill="#e0a030"/></svg>
<div style="left:852px;top:85px;width:1px;height:18px;background:#a0a0a0;"></div>
<svg class="i" style="left:859px;top:87px" width="16" height="16" viewBox="0 0 16 16"><path d="M1 1.500Q1 0.500 2.500 0.500H13.500Q15 0.500 15 1.500L13.500 6.500Q13.200 7.500 12 7.500H4Q2.800 7.500 2.500 6.500Z" fill="#f0f0e8" stroke="#303030" stroke-width="1.200"/><path d="M4 2v3.500M6 2v3.500M8 2v3.500M10 2v3.500M12 2v3.500" stroke="#505050" stroke-width="0.900"/><path d="M8 7.500V11" stroke="#b09020" stroke-width="1.200"/><path d="M0 13.500H16" stroke="#b09020" stroke-width="1.200"/><rect x="6" y="11" width="4" height="4.500" fill="#f8d840" stroke="#b09020" stroke-width="0.800"/></svg>
<svg class="i" style="left:881px;top:99px" width="5" height="3" viewBox="0 0 5 3"><path d="M0 0h5L2.5 3z" fill="#000"/></svg>
<div style="left:890px;top:83px;width:1px;height:24px;background:#c8c8c8;"></div>
<div style="left:2px;top:108px;width:317px;height:358px;background:#f0f0f0;"></div>
<div style="left:2px;top:109px;width:316px;height:19px;background:#c4d0e1;"></div>
<div style="left:2px;top:108px;width:316px;height:1px;background:#929292;"></div>
<div style="left:2px;top:128px;width:316px;height:1px;background:#9a9a9a;"></div>
<div class="k" style="left:6px;top:112.5px;font-size:12px;color:#000;">画面</div>
<svg class="i" style="left:288px;top:112px" width="10" height="12" viewBox="0 0 10 12"><path d="M3 0.500H7V6.500H3ZM1 6.500H9M5 6.500V11.500" fill="none" stroke="#000" stroke-width="1.300"/><rect x="5.500" y="1" width="1.500" height="5" fill="#000"/></svg>
<svg class="i" style="left:304px;top:113px" width="10" height="10" viewBox="0 0 10 10"><path d="M1 1L9 8M9 1L1 8" stroke="#000" stroke-width="1.600" fill="none"/></svg>
<div style="left:2px;top:129px;width:316px;height:290px;background:#fff;border:1px solid #8a8a8a;border-top:none;box-sizing:border-box;"></div>
<div style="left:3px;top:162px;width:314px;height:16px;background:#f0f0f0;"></div>
<svg class="i" style="left:10px;top:134px" width="9" height="9" viewBox="0 0 9 9"><rect x="0.5" y="0.5" width="8" height="8" fill="#fff" stroke="#919191"/><path d="M2 4.5h5" stroke="#333" stroke-width="1"/></svg>
<svg class="i" style="left:29px;top:150px" width="9" height="9" viewBox="0 0 9 9"><rect x="0.5" y="0.5" width="8" height="8" fill="#fff" stroke="#919191"/><path d="M2 4.5h5" stroke="#333" stroke-width="1"/></svg>
<svg class="i" style="left:10px;top:198px" width="9" height="9" viewBox="0 0 9 9"><rect x="0.5" y="0.5" width="8" height="8" fill="#fff" stroke="#919191"/><path d="M2 4.5h5" stroke="#333" stroke-width="1"/><path d="M4.5 2v5" stroke="#333" stroke-width="1"/></svg>
<svg class="i" style="left:25px;top:130px" width="16" height="16" viewBox="0 0 16 16"><rect x="0" y="2" width="15" height="13" rx="1.500" fill="#686c68"/><rect x="0.800" y="2.800" width="13.400" height="11.400" rx="1" fill="#b8bcb8"/><defs><linearGradient id="gts" x1="0" y1="0" x2="1" y2="1"><stop offset="0" stop-color="#10a020"/><stop offset="1" stop-color="#60d870"/></linearGradient></defs><rect x="2" y="4" width="11" height="9" fill="url(#gts)"/><path d="M13.800 0.300L15.800 2.200L5.200 14.800L2.600 16L3.300 13.200Z" fill="#f0f6fc" stroke="#4878b0" stroke-width="0.800"/><path d="M13.300 0L16 2.300L14.700 3.800L12 1.500Z" fill="#2880d8"/><path d="M2.300 16.200L5.400 14.500L3.500 12.900Z" fill="#2880d8"/></svg>
<svg class="i" style="left:44px;top:146px" width="16" height="15" viewBox="0 0 16 15"><defs><linearGradient id="gtf" x1="0" y1="0" x2="0" y2="1"><stop offset="0" stop-color="#fff0a8"/><stop offset="1" stop-color="#e8b030"/></linearGradient></defs><path d="M0.500 10.500V2.500Q0.500 1 2 1H5L6.500 2.500H11.500Q12.500 2.500 12.500 3.500V10.500Z" fill="url(#gtf)" stroke="#b08018" stroke-width="0.800"/><rect x="5.5" y="7.5" width="10" height="7" fill="#e8ecf0" stroke="#50545c"/><rect x="5" y="7" width="11" height="2.5" fill="#20244c"/></svg>
<div style="left:63px;top:163px;width:15px;height:14px;background:#d8d8fc;border:1px solid #222;box-sizing:border-box;"></div>
<svg class="i" style="left:46px;top:178px" width="14" height="15" viewBox="0 0 14 15"><path d="M0.500 0.500H7L10.500 4V14.500H0.500Z" fill="#f8f8f8" stroke="#909090"/><path d="M7 0.500V4H10.500" fill="#e0e0e0" stroke="#909090"/><rect x="3.5" y="6.5" width="10" height="8" fill="#e8ecf4" stroke="#606470"/><rect x="3" y="6" width="11" height="2.5" fill="#1c2088"/></svg>
<svg class="i" style="left:25px;top:194px" width="16" height="16" viewBox="0 0 16 16"><rect x="0" y="2" width="15" height="13" rx="1.500" fill="#686c68"/><rect x="0.800" y="2.800" width="13.400" height="11.400" rx="1" fill="#b8bcb8"/><defs><linearGradient id="gts2" x1="0" y1="0" x2="1" y2="1"><stop offset="0" stop-color="#10a020"/><stop offset="1" stop-color="#60d870"/></linearGradient></defs><rect x="2" y="4" width="11" height="9" fill="url(#gts2)"/><path d="M13.800 0.300L15.800 2.200L5.200 14.800L2.600 16L3.300 13.200Z" fill="#f0f6fc" stroke="#4878b0" stroke-width="0.800"/><path d="M13.300 0L16 2.300L14.700 3.800L12 1.500Z" fill="#2880d8"/><path d="M2.300 16.200L5.400 14.500L3.500 12.900Z" fill="#2880d8"/></svg>
<svg class="i" style="left:27px;top:211px" width="12" height="15" viewBox="0 0 12 15"><ellipse cx="5.500" cy="2.500" rx="5" ry="2" fill="#d0d0d0" stroke="#606060" stroke-width="0.900"/><path d="M1 4L2 13.500Q5.500 15 9 13.500L10 4Q5.500 6 1 4Z" fill="#c8c8c8" stroke="#606060" stroke-width="0.900"/><path d="M3.500 6V13M5.500 6.500V13.500M7.500 6V13" stroke="#808080" stroke-width="0.800"/><path d="M10 6.500Q12 7.500 11 11" fill="none" stroke="#808080" stroke-width="1"/></svg>
<div class="k" style="left:46px;top:132px;font-size:12px;color:#000;">画面</div>
<div class="t" style="left:65.5px;top:148px;font-size:12px;color:#000;transform:scaleX(0.78);transform-origin:0 0;-webkit-text-stroke:0.3px #000;">0000:</div>
<div class="t" style="left:85px;top:164px;font-size:11.5px;color:#000;font-weight:bold;letter-spacing:0px;">B: @0000_B</div>
<div class="k" style="left:65px;top:180px;font-size:12px;color:#000;">新規画面</div>
<div class="k" style="left:46px;top:196px;font-size:12px;color:#000;"><span style="display:inline-block;transform:scaleX(0.75);transform-origin:0 50%;margin-right:-30.00px">グローバルウィンドウ</span></div>
<div class="k" style="left:46px;top:212px;font-size:12px;color:#000;"><span style="display:inline-block;transform:scaleX(0.8);transform-origin:0 50%;margin-right:-4.80px">ごみ</span>箱</div>
<svg class="i" style="left:6px;top:424px" width="16" height="14" viewBox="0 0 16 14"><rect x="0.5" y="1.5" width="13" height="12" fill="#eef0f4" stroke="#505868"/><rect x="0" y="1" width="14" height="3" fill="#1c2c8c"/><rect x="1" y="1" width="2" height="2" fill="#e8c040"/><rect x="0" y="13" width="14" height="1" fill="#606470"/><path d="M15 -0.500L16.500 1.200L10 9.800L7.600 11L8 8.300Z" fill="#18b040" stroke="#0a6a20" stroke-width="0.700"/><path d="M6.600 12L9.600 9.900L8 8.300Z" fill="#111"/></svg>
<svg class="i" style="left:28px;top:424px" width="16" height="14" viewBox="0 0 16 14"><rect x="0.500" y="0.500" width="15" height="13" fill="#c4dcb4" stroke="#6c6c58"/><rect x="1" y="1" width="14" height="3" fill="#f8e020"/><rect x="1" y="1" width="2" height="3" fill="#d02020"/><g fill="#3c8c3c"><rect x="2.500" y="5.500" width="1" height="1"/><rect x="5" y="5.500" width="1" height="1"/><rect x="7.500" y="5.500" width="1" height="1"/><rect x="10" y="5.500" width="1" height="1"/><rect x="12.500" y="5.500" width="1" height="1"/><rect x="2.500" y="8" width="1" height="1"/><rect x="5" y="8" width="1" height="1"/><rect x="7.500" y="8" width="1" height="1"/><rect x="10" y="8" width="1" height="1"/><rect x="12.500" y="8" width="1" height="1"/><rect x="2.500" y="10.500" width="1" height="1"/><rect x="5" y="10.500" width="1" height="1"/><rect x="7.500" y="10.500" width="1" height="1"/><rect x="10" y="10.500" width="1" height="1"/><rect x="12.500" y="10.500" width="1" height="1"/></g></svg>
<svg class="i" style="left:50px;top:424px" width="16" height="15" viewBox="0 0 16 15"><rect x="0.5" y="0.5" width="10" height="8" fill="#f0f4f8" stroke="#404858"/><rect x="0" y="0" width="11" height="3" fill="#18207c"/><rect x="1" y="0" width="2" height="2" fill="#e8c040"/><rect x="4.5" y="6.5" width="11" height="8" fill="#f0f4f8" stroke="#404858"/><rect x="4" y="6" width="12" height="3" fill="#18207c"/><rect x="5" y="6" width="2" height="2" fill="#e8c040"/></svg>
<svg class="i" style="left:72px;top:424px" width="16" height="15" viewBox="0 0 16 15"><path d="M0 4L5 0H10L14 4V6H16V15H5V13H0Z" fill="#a0a0a0"/><rect x="7" y="9.500" width="8" height="2" fill="#e8e8e8"/></svg>
<svg class="i" style="left:94px;top:424px" width="16" height="15" viewBox="0 0 16 15"><rect x="0.5" y="1.5" width="14" height="12" fill="#eef0f4" stroke="#606878"/><rect x="0" y="1" width="15" height="3" fill="#3848a0"/><rect x="1" y="1" width="2" height="2" fill="#e8c040"/><path d="M0 11L6 6L9 9" fill="none" stroke="#555" stroke-width="1"/><path d="M12.500 0L16 2.500L10.500 9.500L7 7Z" fill="#78b0e8" stroke="#3868a8" stroke-width="0.700"/><path d="M7 7L10.500 9.500L8 11L5.500 10Z" fill="#e8f0f8" stroke="#8090a0" stroke-width="0.600"/></svg>
<svg class="i" style="left:116px;top:424px" width="16" height="15" viewBox="0 0 16 15"><defs><linearGradient id="gfo2" x1="0" y1="0" x2="0" y2="1"><stop offset="0" stop-color="#fff0a0"/><stop offset="1" stop-color="#f0c030"/></linearGradient></defs><path d="M1.5 14.5V5.5Q1.5 4.5 2.5 4.5H6L7.5 6H12.5V8" fill="#f8e080" stroke="#b08820"/><path d="M1.5 14.5L4.5 8.5H15.5L12.5 14.5Z" fill="url(#gfo2)" stroke="#b08820"/><path d="M7.5 7.5L13 2" stroke="#e01010" stroke-width="2.2"/><path d="M10 0.5H15.5V6Z" fill="#e01010"/></svg>
<svg class="i" style="left:138px;top:424px" width="16" height="15" viewBox="0 0 16 15"><rect x="0" y="3" width="8" height="9" fill="#d8f0d0" stroke="#70a060" stroke-width="0.800"/><path d="M4 5L1.500 8.500H3V11H5V8.500H6.500Z" fill="#28a030"/><rect x="6.500" y="6.500" width="9" height="8" fill="#fff" stroke="#404040" stroke-width="0.900"/><path d="M8 8.500H14M8 10.500H14M8 12.500H14" stroke="#333" stroke-width="0.900"/><path d="M6 3.500Q6.500 0.500 9.500 1Q12.500 1.500 12.500 5" fill="none" stroke="#d81010" stroke-width="1.400"/><path d="M10.500 4.500H14.500L12.500 7.500Z" fill="#d81010"/><path d="M4.500 2.500L7.500 1.500L7 4.500Z" fill="#d81010"/></svg>
<svg class="i" style="left:161px;top:424px" width="15" height="15" viewBox="0 0 15 15"><rect x="4.500" y="0.500" width="10" height="8" fill="#b0b0b0" stroke="#707070"/><rect x="2.500" y="3.500" width="10" height="8" fill="#f06080" stroke="#a01030"/><defs><linearGradient id="gst" x1="0" y1="0" x2="1" y2="1"><stop offset="0" stop-color="#4880f0"/><stop offset="1" stop-color="#a8c8ff"/></linearGradient></defs><rect x="0.500" y="6.500" width="10" height="8" fill="url(#gst)" stroke="#1020a0"/></svg>
<div style="left:2px;top:444px;width:316px;height:1px;background:#fff;"></div>
<div style="left:2px;top:445px;width:316px;height:1px;background:#a0a0a0;"></div>
<div style="left:93px;top:445px;width:52px;height:20px;background:#fff;border:1px solid #a0a0a0;border-top:none;box-sizing:border-box;border-radius:0 0 4px 4px;"></div>
<svg class="i" style="left:8px;top:447px" width="16" height="15" viewBox="0 0 16 15"><rect x="0.5" y="0.5" width="12" height="10" fill="#f8f8fa" stroke="#404858"/><rect x="0" y="0" width="13" height="3" fill="#18207c"/><rect x="1" y="0" width="2" height="2" fill="#e8c040"/><g transform="translate(10,9.500)"><g fill="#909090"><rect x="-1.300" y="-5.500" width="2.600" height="11" transform="rotate(0)"/><rect x="-1.300" y="-5.500" width="2.600" height="11" transform="rotate(45)"/><rect x="-1.300" y="-5.500" width="2.600" height="11" transform="rotate(90)"/><rect x="-1.300" y="-5.500" width="2.600" height="11" transform="rotate(135)"/></g><circle r="4" fill="#a8a8a8" stroke="#787878" stroke-width="0.800"/><circle r="1.500" fill="#f0f0f0"/></g></svg>
<div class="g" style="left:27.5px;top:449px;font-size:12px;color:#6a6a6a;"><span style="display:inline-block;transform:scaleX(0.74);transform-origin:0 50%;margin-right:-12.48px">システム</span>設定</div>
<svg class="i" style="left:97px;top:447px" width="16" height="15" viewBox="0 0 16 15"><rect x="0.5" y="0.5" width="12" height="10" fill="#f8f8fa" stroke="#404858"/><rect x="0" y="0" width="13" height="3" fill="#18207c"/><rect x="1" y="0" width="2" height="2" fill="#e8c040"/><rect x="5" y="6" width="10" height="8" rx="1" fill="#585c60"/><rect x="6.500" y="7.500" width="6" height="4.500" fill="#20b040"/><path d="M15.500 4.500L16 6L11.500 12L10 12.500L10.500 11Z" fill="#c8e0f8" stroke="#3060a0" stroke-width="0.600"/></svg>
<div class="k" style="left:116px;top:449px;font-size:12px;color:#000;">画面</div>
<div style="left:318px;top:108px;width:642px;height:358px;background:#f0f0f0;"></div>
<div style="left:318px;top:108px;width:4px;height:358px;background:#f8f8fa;"></div>
<div style="left:322px;top:108px;width:584px;height:1px;background:#b4b4b4;"></div>
<div style="left:322px;top:109px;width:584px;height:1px;background:#8e8e8e;"></div>
<div style="left:322px;top:109px;width:1px;height:357px;background:#a0a0a0;"></div>
<div style="left:323px;top:109px;width:1px;height:357px;background:#6e726e;"></div>
<div style="left:324px;top:448px;width:582px;height:1px;background:#fff;"></div>
<div style="left:324px;top:110px;width:564px;height:338px;background:#0b6020;overflow:hidden;"><svg class="i" style="left:0;top:0" width="564" height="338"><defs><pattern id="ck" width="4" height="4" patternUnits="userSpaceOnUse"><rect width="4" height="4" fill="#106e26"/><rect x="2" y="0" width="2" height="2" fill="#033b11"/><rect x="0" y="2" width="2" height="2" fill="#054e19"/></pattern><pattern id="yd" width="8" height="8" patternUnits="userSpaceOnUse"><rect x="0" y="0" width="2" height="2" fill="#3a6824"/></pattern><pattern id="rd" x="-1" y="-1" width="8" height="8" patternUnits="userSpaceOnUse"><rect x="0" y="0" width="3" height="3" fill="#0b0202"/><rect x="1" y="1" width="1" height="1" fill="#8c2830"/></pattern><clipPath id="cpb"><rect x="32" y="32" width="320" height="128"/></clipPath></defs><rect width="564" height="338" fill="url(#ck)"/><rect width="564" height="338" fill="url(#yd)"/><rect x="32" y="32" width="320" height="128" fill="#010101"/><rect x="24" y="24" width="336" height="144" fill="url(#rd)" clip-path="url(#cpb)"/></svg></div>
<div style="left:896px;top:225px;width:2px;height:67px;background:#8a8a8a;border-radius:1px;"></div>
<div style="left:515px;top:456px;width:146px;height:2px;background:#8a8a8a;border-radius:1px;"></div>
<div style="left:907px;top:110px;width:1px;height:356px;background:#fff;"></div>
<div style="left:932px;top:110px;width:1px;height:356px;background:#d0d0d0;"></div>
<div style="left:933px;top:110px;width:1px;height:356px;background:#fff;"></div>
<div style="left:909px;top:112px;width:22px;height:2px;background-image:repeating-linear-gradient(to right,#bdbdbd 0,#bdbdbd 2px,transparent 2px,transparent 4px);"></div>
<div style="left:935px;top:112px;width:24px;height:2px;background-image:repeating-linear-gradient(to right,#bdbdbd 0,#bdbdbd 2px,transparent 2px,transparent 4px);"></div>
<svg class="i" style="left:912px;top:124px" width="16" height="12" viewBox="0 0 16 12"><path d="M2.500 1L13.500 10.500" stroke="#000" stroke-width="1.500"/></svg>
<svg class="i" style="left:912px;top:148px" width="16" height="8" viewBox="0 0 16 8"><path d="M0.500 6.500L3 3.500L5.500 6.500L9 1.500L11 4L15.500 0.800" fill="none" stroke="#000" stroke-width="1.500"/></svg>
<svg class="i" style="left:912px;top:168px" width="16" height="11" viewBox="0 0 16 11"><rect x="1.700" y="0.700" width="13" height="9" fill="#808080" stroke="#000" stroke-width="1.300"/></svg>
<svg class="i" style="left:912px;top:188px" width="16" height="14" viewBox="0 0 16 14"><path d="M8 0.700L14.300 4V10.500L8 13.500L1.700 10.500V4Z" fill="#808080" stroke="#000" stroke-width="1.300"/></svg>
<svg class="i" style="left:912px;top:212px" width="16" height="10" viewBox="0 0 16 10"><ellipse cx="8.200" cy="5" rx="6.600" ry="4.300" fill="#808080" stroke="#000" stroke-width="1.300"/></svg>
<svg class="i" style="left:912px;top:232px" width="16" height="14" viewBox="0 0 16 14"><path d="M2.500 1Q13 1 14.500 13.500" fill="none" stroke="#000" stroke-width="1.500"/></svg>
<svg class="i" style="left:912px;top:255px" width="16" height="13" viewBox="0 0 16 13"><path d="M2.700 0.700Q13 1 15.300 10.500V12.300H2.700Z" fill="#808080" stroke="#000" stroke-width="1.300"/></svg>
<div style="left:911px;top:274px;width:18px;height:1px;background:#a0a0a0;"></div>
<svg class="i" style="left:912px;top:282px" width="15" height="15" viewBox="0 0 15 15"><rect x="0.500" y="0.500" width="14" height="14" fill="#d8ecf8" stroke="#303840" stroke-width="1.200"/><rect x="1.500" y="10" width="12" height="3.800" fill="#f0f4e8"/><circle cx="7.500" cy="5.800" r="3.800" fill="#189828"/><circle cx="5.500" cy="7" r="2" fill="#30b840"/><rect x="7" y="8.500" width="1.200" height="4" fill="#6a4a20"/></svg>
<svg class="i" style="left:912px;top:304px" width="15" height="14" viewBox="0 0 15 14"><rect x="1.500" y="1.500" width="12" height="11" rx="2.500" fill="#ececec" stroke="#f2e22a" stroke-width="3"/></svg>
<div style="left:911px;top:324px;width:18px;height:1px;background:#a0a0a0;"></div>
<svg class="i it" style="left:913px;top:332px" width="16" height="15" viewBox="0 0 16 15"><text x="7.700" y="14" text-anchor="middle" font-family="Liberation Serif,serif" font-weight="bold" font-size="20" fill="#000">A</text></svg>
<svg class="i it" style="left:912px;top:354px" width="16" height="16" viewBox="0 0 16 16"><text x="0.500" y="7" font-family="Liberation Sans,sans-serif" font-size="8.500" fill="#000" textLength="15" lengthAdjust="spacingAndGlyphs">TE</text><text x="0" y="15" font-family="Liberation Sans,sans-serif" font-size="8.500" fill="#000" textLength="15.500" lengthAdjust="spacingAndGlyphs">XT</text></svg>
<svg class="i" style="left:912px;top:376px" width="16" height="15" viewBox="0 0 16 15"><path d="M4.500 3.500H14.500V12L12 14.500H4.500Z" fill="#f8f8f8" stroke="#606060" stroke-width="0.900"/><path d="M6.500 7H12M6.500 9H12M6.500 11H10" stroke="#a0a0a0" stroke-width="0.800"/><circle cx="2.500" cy="3" r="2.300" fill="#18b0c8" stroke="#0a6880" stroke-width="0.600"/><circle cx="5.800" cy="2.500" r="2.300" fill="#30c8d8" stroke="#0a6880" stroke-width="0.600"/></svg>
<div style="left:911px;top:396px;width:18px;height:1px;background:#a0a0a0;"></div>
<svg class="i it" style="left:912px;top:407px" width="16" height="11" viewBox="0 0 16 11"><text x="0" y="10" font-family="Liberation Sans,sans-serif" font-weight="bold" font-size="12.500" fill="#000" textLength="16" lengthAdjust="spacingAndGlyphs">DXF</text></svg>
<svg class="i" style="left:913px;top:427px" width="14" height="13" viewBox="0 0 14 13"><rect x="0.800" y="0.800" width="12" height="11.400" fill="#fff" stroke="#000" stroke-width="1.500"/><path d="M4.800 0.800V12.200M8.800 0.800V12.200M0.800 4.600H12.800M0.800 8.400H12.800" stroke="#000" stroke-width="1.300"/></svg>
<svg class="i" style="left:913px;top:456px" width="16" height="8" viewBox="0 0 16 8"><path d="M0 3.500L3 1V6Z" fill="#000"/><path d="M10 0.500L12.500 3L15 0.500M10 4L12.500 6.500L15 4" fill="none" stroke="#000" stroke-width="1.400"/></svg>
<svg class="i it" style="left:938px;top:124px" width="16" height="12" viewBox="0 0 16 12"><rect x="0.500" y="0.500" width="14" height="10" fill="#f4f4f4" stroke="#404040" stroke-width="1"/><path d="M1 10.500H15V1" fill="none" stroke="#888" stroke-width="1"/><text x="1.700" y="9.200" font-family="Liberation Sans,sans-serif" font-weight="bold" font-size="9.500" fill="#000" textLength="11.500" lengthAdjust="spacingAndGlyphs">123</text></svg>
<svg class="i it" style="left:938px;top:146px" width="16" height="12" viewBox="0 0 16 12"><rect x="0.500" y="0.500" width="14" height="10" fill="#f4f4f4" stroke="#404040" stroke-width="1"/><path d="M1 10.500H15V1" fill="none" stroke="#888" stroke-width="1"/><text x="1.700" y="9.200" font-family="Liberation Sans,sans-serif" font-weight="bold" font-size="9.500" fill="#000" textLength="11.500" lengthAdjust="spacingAndGlyphs">ABC</text></svg>
<svg class="i" style="left:938px;top:167px" width="16" height="13" viewBox="0 0 16 13"><rect x="0.500" y="0.500" width="14" height="12" rx="1" fill="#d4dce0" stroke="#606870" stroke-width="1"/><path d="M2.500 3H10M2.500 5H8M2.500 7H10M2.500 9H8M2.500 11H10" stroke="#40484c" stroke-width="0.900"/><rect x="11.500" y="2" width="2" height="9" fill="#f4f4f4" stroke="#808890" stroke-width="0.500"/></svg>
<svg class="i" style="left:938px;top:189px" width="16" height="12" viewBox="0 0 16 12"><path d="M5.500 4L10 1.500Q12 6 10 10.500L5.500 8Z" fill="#e01818"/><path d="M10 3L15 2Q15.500 6 15 10L10 9Z" fill="#e83030"/><ellipse cx="8" cy="6" rx="1.500" ry="2" fill="#ff8080"/><path d="M3.500 1.500Q1.500 6 3.500 10.500M1.500 0.500Q-1 6 1.500 11.500" fill="none" stroke="#e01818" stroke-width="0.900"/></svg>
<svg class="i" style="left:938px;top:210px" width="16" height="15" viewBox="0 0 16 15"><path d="M4 2L8 0H11L14 2.500L15 6V10L12 12V14.500H7V12L4 10L0 11V5L4 6Z" fill="#a0a0a0"/></svg>
<svg class="i" style="left:938px;top:232px" width="16" height="15" viewBox="0 0 16 15"><g fill="#e8e8e8" stroke="#202020" stroke-width="1"><path d="M1.500 3Q1.500 0.800 3.500 0.800Q5.500 0.800 5.500 3V12Q5.500 14.200 3.500 14.200Q1.500 14.200 1.500 12Z"/><path d="M10 3Q10 0.800 12 0.800Q14 0.800 14 3V12Q14 14.200 12 14.200Q10 14.200 10 12Z"/><path d="M5.500 3.500L10 1.500V10.500L5.500 12.500Z" fill="#c8c8c8"/></g><path d="M3.500 3V12M12 3V12" stroke="#606060" stroke-width="0.800" stroke-dasharray="1.500 1.500"/></svg>
<svg class="i" style="left:938px;top:254px" width="16" height="15" viewBox="0 0 16 15"><rect x="7" y="0.500" width="8" height="6" fill="#2890e8" stroke="#1040a0" stroke-width="0.800"/><path d="M0 3H6" stroke="#1040c0" stroke-width="1.300"/><path d="M2 1V5M4.500 1V5" stroke="#1040c0" stroke-width="1.200"/><rect x="0.500" y="8.500" width="8" height="6" fill="#f8d020" stroke="#a08010" stroke-width="0.800"/><path d="M14 7V11H10" fill="none" stroke="#d81010" stroke-width="1.600"/><path d="M7.500 11L11 8V14Z" fill="#d81010"/></svg>
<svg class="i" style="left:938px;top:276px" width="16" height="16" viewBox="0 0 16 16"><path d="M0 2L3 0H10L15 3V6L13 5.500V7L15 8V13L11 15.500H5L0 11Z" fill="#a0a0a0"/></svg>
<svg class="i" style="left:938px;top:298px" width="16" height="16" viewBox="0 0 16 16"><path d="M0 0H9V4H15V12.500H11V14.500H13V15.500H6V14.500H8V12.500H5V8H0Z" fill="#a0a0a0"/></svg>
<div style="left:937px;top:318px;width:18px;height:1px;background:#a0a0a0;"></div>
<svg class="i" style="left:938px;top:328px" width="16" height="11" viewBox="0 0 16 11"><path d="M1 0V3M4.200 0V3M7.500 0V3M10.800 0V3M14 0V3M0 3H15" stroke="#222" stroke-width="0.900" fill="none"/><rect x="0.500" y="4.500" width="14" height="5" rx="1" fill="#f0f0f0" stroke="#404040" stroke-width="0.900"/><rect x="1" y="5" width="8" height="4" fill="#e01818"/><rect x="1" y="5" width="8" height="1.300" fill="#f06060"/></svg>
<svg class="i" style="left:939px;top:349px" width="14" height="14" viewBox="0 0 14 14"><g transform="translate(6.500,6.500)"><g stroke="#222" stroke-width="1"><path d="M0 -6.800V-5" transform="rotate(0)"/><path d="M0 -6.800V-5" transform="rotate(45)"/><path d="M0 -6.800V-5" transform="rotate(90)"/><path d="M0 -6.800V-5" transform="rotate(135)"/><path d="M0 -6.800V-5" transform="rotate(180)"/><path d="M0 -6.800V-5" transform="rotate(225)"/><path d="M0 -6.800V-5" transform="rotate(270)"/><path d="M0 -6.800V-5" transform="rotate(315)"/></g><circle r="5.300" fill="#e8e8e8" stroke="#303030" stroke-width="1"/><path d="M0 -4.300A4.300 4.300 0 1 1 -3.700 2.200L-1.700 1A2 2 0 1 0 0 -2Z" fill="#e01818"/><circle r="1.400" fill="#c0c0c0" stroke="#404040" stroke-width="0.600"/></g></svg>
<svg class="i" style="left:938px;top:372px" width="16" height="10" viewBox="0 0 16 10"><path d="M0.500 2V4M4 1V3M7.500 0.500V2.500M11 1V3M14.500 2V4" stroke="#222" stroke-width="0.900"/><path d="M0.500 4H14.500L13 9.500H2Z" fill="#e01818" stroke="#601010" stroke-width="0.800"/><path d="M9 5H13.500L12.700 8.500H9Z" fill="#f4f4f4"/></svg>
<svg class="i" style="left:939px;top:410px" width="16" height="8" viewBox="0 0 16 8"><path d="M0 3.500L3 1V6Z" fill="#000"/><path d="M10 0.500L12.500 3L15 0.500M10 4L12.500 6.500L15 4" fill="none" stroke="#000" stroke-width="1.400"/></svg>
<div style="left:933px;top:421px;width:27px;height:1px;background:#d0d0d0;"></div>
<div style="left:933px;top:422px;width:27px;height:1px;background:#fff;"></div>
<div style="left:935px;top:426px;width:24px;height:2px;background-image:repeating-linear-gradient(to right,#bdbdbd 0,#bdbdbd 2px,transparent 2px,transparent 4px);"></div>
<svg class="i" style="left:940px;top:436px" width="12" height="15" viewBox="0 0 12 15"><rect x="0.500" y="0.500" width="11" height="10" fill="#68c848" stroke="#386828" stroke-width="1"/><rect x="1.500" y="1.500" width="9" height="3" fill="#98e078"/><path d="M3.500 14.500V6.500Q3.500 4 5.750 4Q8 4 8 6.500V14.500Z" fill="#f8d8a8" stroke="#a87838" stroke-width="0.800"/><ellipse cx="5.750" cy="6" rx="1.500" ry="1.300" fill="#fff4e0"/></svg>
<svg class="i" style="left:939px;top:456px" width="16" height="8" viewBox="0 0 16 8"><path d="M0 3.500L3 1V6Z" fill="#000"/><path d="M10 0.500L12.500 3L15 0.500M10 4L12.500 6.500L15 4" fill="none" stroke="#000" stroke-width="1.400"/></svg>
<div style="left:1px;top:466px;width:958px;height:1px;background:#fff;"></div>
<div style="left:5px;top:469px;width:2px;height:46px;background-image:repeating-linear-gradient(to bottom,#bdbdbd 0,#bdbdbd 2px,transparent 2px,transparent 4px);"></div>
<svg class="i" style="left:14px;top:472px" width="16" height="16" viewBox="0 0 16 16"><path d="M11 0L16 4.500V6.500H13.500V9.500H15.500V14.500H9V12L7 15.500H2L0 12.500V9.500L2.500 7.500H5.500V4.500Z" fill="#a0a0a0"/></svg>
<div style="left:33px;top:469px;width:22px;height:21px;background:#cce4f7;border:1px solid #99c9ef;box-sizing:border-box;border-radius:2px;"></div>
<svg class="i" style="left:40px;top:473px" width="10" height="15" viewBox="0 0 10 15"><path d="M0.700 0.700V11.800L3.300 9.200L5.500 14L7.700 13L5.500 8.300H9Z" fill="#f0e020" stroke="#222" stroke-width="1.100" stroke-linejoin="round"/></svg>
<div style="left:58px;top:470px;width:1px;height:18px;background:#a0a0a0;"></div>
<svg class="i" style="left:64px;top:472px" width="16" height="16" viewBox="0 0 16 16"><circle cx="4" cy="3.500" r="3.500" fill="#a0a0a0"/><rect x="8.500" y="0.500" width="7" height="6" fill="#a0a0a0"/><rect x="2" y="6" width="12.500" height="9.500" fill="#a0a0a0"/><path d="M3.500 13V11M5.500 13V10M8 11.500H10M11 10V13M13 10V13" stroke="#f0f0f0" stroke-width="0.900"/></svg>
<svg class="i" style="left:86px;top:472px" width="16" height="16" viewBox="0 0 16 16"><path d="M3.500 0L7 2V6L3.500 8L0 6V2Z" fill="#a0a0a0"/><path d="M11.500 5.500L16 8.500V13L11.500 15.500L7 13V8.500Z" fill="#a0a0a0"/><path d="M8.500 1.500L13 6M13 2.500V6H9.500" fill="none" stroke="#a0a0a0" stroke-width="1"/></svg>
<svg class="i" style="left:110px;top:473px" width="15" height="15" viewBox="0 0 15 15"><rect x="0" y="0" width="11.500" height="11.500" fill="#a0a0a0"/><path d="M0.500 0.500L11 11M11 0.500L0.500 11" stroke="#e0e0e0" stroke-width="0.900"/><path d="M13.500 0V14H-1" fill="none" stroke="#a0a0a0" stroke-width="1"/></svg>
<div style="left:129px;top:470px;width:1px;height:18px;background:#a0a0a0;"></div>
<svg class="i" style="left:137px;top:473px" width="16" height="13" viewBox="0 0 16 13"><rect x="4" y="1.500" width="8" height="9" fill="none" stroke="#a0a0a0" stroke-width="1" stroke-dasharray="1.200 1.200"/><path d="M11 1Q14 1.500 13 5M1.500 7.500Q1 11.500 5 12" fill="none" stroke="#a0a0a0" stroke-width="1"/><path d="M11 5H15L13 7.500Z" fill="#a0a0a0"/><path d="M0 8.500H4L2 6Z" fill="#a0a0a0"/></svg>
<svg class="i" style="left:159px;top:474px" width="14" height="11" viewBox="0 0 14 11"><path d="M6 0V11H0Z" fill="#a0a0a0"/><path d="M8 0V11H14Z" fill="#a0a0a0"/></svg>
<svg class="i" style="left:183px;top:473px" width="12" height="14" viewBox="0 0 12 14"><path d="M11.500 0V6H0Z" fill="#a0a0a0"/><path d="M11.500 13.500V7.500H0Z" fill="#a0a0a0"/></svg>
<svg class="i" style="left:202px;top:472px" width="16" height="16" viewBox="0 0 16 16"><path d="M8 6L16 16H0Z" fill="#a0a0a0"/><path d="M8 0.500L4 6.500M8 0.500L12 6.500" stroke="#a0a0a0" stroke-width="1.200" stroke-dasharray="1.300 1.300" fill="none"/><rect x="7.200" y="0" width="1.600" height="1.600" fill="#a0a0a0"/></svg>
<div style="left:223px;top:470px;width:1px;height:18px;background:#a0a0a0;"></div>
<svg class="i" style="left:230px;top:473px" width="16" height="14" viewBox="0 0 16 14"><path d="M0 0H7V2.500H11V5.500H15.500V14H8V11H4V7H0Z" fill="#a0a0a0"/></svg>
<svg class="i" style="left:252px;top:473px" width="16" height="14" viewBox="0 0 16 14"><path d="M0 0H7V2.500H11V5.500H15.500V14H8.500V11H4.500V7H0Z" fill="#a0a0a0"/></svg>
<svg class="i" style="left:275px;top:473px" width="14" height="14" viewBox="0 0 14 14"><path d="M0 0H8V4.500H13.500V13.500H5V8H0Z" fill="#a0a0a0"/></svg>
<svg class="i" style="left:297px;top:473px" width="14" height="14" viewBox="0 0 14 14"><path d="M0 0H8.500V4.500H14V13.500H5.500V8H0Z" fill="#a0a0a0"/></svg>
<svg class="i" style="left:318px;top:472px" width="16" height="15" viewBox="0 0 16 15"><path d="M3 2H9V5H14V13H8V10H3Z" fill="#a0a0a0"/><rect x="0" y="0" width="3" height="2.500" fill="#a0a0a0"/><rect x="13.500" y="0" width="2.500" height="2.500" fill="#a0a0a0"/><rect x="0" y="12.500" width="2.500" height="2.500" fill="#a0a0a0"/><rect x="13.500" y="12.500" width="2.500" height="2.500" fill="#a0a0a0"/></svg>
<svg class="i" style="left:340px;top:472px" width="16" height="15" viewBox="0 0 16 15"><path d="M0 0H10.500V4H16V15H4.500V9.500H0ZM0 5.500H2V7.500H0Z" fill="#a0a0a0"/></svg>
<svg class="i" style="left:362px;top:472px" width="16" height="15" viewBox="0 0 16 15"><path d="M0.500 0V15" stroke="#a0a0a0" stroke-width="1"/><path d="M6 1H15V6H16V15H9V10H6Z" fill="#a0a0a0"/><path d="M1 4.500H7M1 11.500H9" stroke="#a0a0a0" stroke-width="1"/><path d="M1 4.500L4 2.500V6.500ZM1 11.500L4 9.500V13.500Z" fill="#a0a0a0"/></svg>
<svg class="i" style="left:382px;top:478px" width="7" height="4" viewBox="0 0 7 4"><path d="M0 0h7L3.500 4z" fill="#808080"/></svg>
<svg class="i" style="left:395px;top:484px" width="5" height="3" viewBox="0 0 5 3"><path d="M0 0h5L2.5 3z" fill="#000"/></svg>
<div style="left:404px;top:468px;width:1px;height:24px;background:#d8d8d8;"></div>
<div style="left:409px;top:469px;width:2px;height:22px;background-image:repeating-linear-gradient(to bottom,#bdbdbd 0,#bdbdbd 2px,transparent 2px,transparent 4px);"></div>
<div style="left:415px;top:469px;width:22px;height:21px;background:#cce4f7;border:1px solid #99c9ef;box-sizing:border-box;border-radius:2px;"></div>
<svg class="i" style="left:418px;top:472px" width="16" height="16" viewBox="0 0 16 16"><path d="M2 0V14" stroke="#2050c8" stroke-width="1.400"/><rect x="1" y="0.700" width="6" height="5" fill="#f4d8f4" stroke="#6030c0" stroke-width="1.200"/><rect x="5.5" y="8.5" width="7" height="5.5" fill="#909090"/><rect x="4.5" y="7.5" width="7" height="5.5" fill="#f4f4f4" stroke="#606060" stroke-width="1"/><g transform="translate(8,7) scale(0.62)"><path d="M0.500 0.500V11L3 8.500L5 13L7 12L5 7.800H8.500Z" fill="#f0e020" stroke="#222" stroke-width="1" stroke-linejoin="round"/></g></svg>
<div style="left:439px;top:470px;width:1px;height:18px;background:#a0a0a0;"></div>
<div style="left:443px;top:469px;width:22px;height:21px;background:#cce4f7;border:1px solid #99c9ef;box-sizing:border-box;border-radius:2px;"></div>
<svg class="i" style="left:446px;top:472px" width="16" height="16" viewBox="0 0 16 16"><path d="M1 0.500V15M1 3H4M1 11H4" stroke="#2050c8" stroke-width="1.400"/><rect x="4.0" y="4.0" width="9.5" height="8" fill="#909090"/><rect x="3.0" y="3.0" width="9.5" height="8" fill="#f4f4f4" stroke="#606060" stroke-width="1"/><g transform="translate(8,4.5) scale(0.78)"><path d="M0.500 0.500V11L3 8.500L5 13L7 12L5 7.800H8.500Z" fill="#f0e020" stroke="#222" stroke-width="1" stroke-linejoin="round"/></g></svg>
<svg class="i" style="left:470px;top:472px" width="16" height="16" viewBox="0 0 16 16"><path d="M11.500 0.500V15" stroke="#2050c8" stroke-width="1.400"/><rect x="1.5" y="4.0" width="9.5" height="8" fill="#909090"/><rect x="0.5" y="3.0" width="9.5" height="8" fill="#f4f4f4" stroke="#606060" stroke-width="1"/><g transform="translate(4.5,4.5) scale(0.78)"><path d="M0.500 0.500V11L3 8.500L5 13L7 12L5 7.800H8.500Z" fill="#f0e020" stroke="#222" stroke-width="1" stroke-linejoin="round"/></g></svg>
<div style="left:487px;top:469px;width:22px;height:21px;background:#cce4f7;border:1px solid #99c9ef;box-sizing:border-box;border-radius:2px;"></div>
<svg class="i" style="left:490px;top:472px" width="16" height="16" viewBox="0 0 16 16"><path d="M0 1.500H15" stroke="#2050c8" stroke-width="1.400"/><rect x="3.5" y="3.5" width="9.5" height="8" fill="#909090"/><rect x="2.5" y="2.5" width="9.5" height="8" fill="#f4f4f4" stroke="#606060" stroke-width="1"/><g transform="translate(7,4.5) scale(0.78)"><path d="M0.500 0.500V11L3 8.500L5 13L7 12L5 7.800H8.500Z" fill="#f0e020" stroke="#222" stroke-width="1" stroke-linejoin="round"/></g></svg>
<svg class="i" style="left:512px;top:472px" width="16" height="16" viewBox="0 0 16 16"><path d="M0 9.500H15" stroke="#2050c8" stroke-width="1.400"/><rect x="3.5" y="2.5" width="9.5" height="8" fill="#909090"/><rect x="2.5" y="1.5" width="9.5" height="8" fill="#f4f4f4" stroke="#606060" stroke-width="1"/><g transform="translate(6.5,4.5) scale(0.78)"><path d="M0.500 0.500V11L3 8.500L5 13L7 12L5 7.800H8.500Z" fill="#f0e020" stroke="#222" stroke-width="1" stroke-linejoin="round"/></g></svg>
<div style="left:531px;top:469px;width:22px;height:21px;background:#cce4f7;border:1px solid #99c9ef;box-sizing:border-box;border-radius:2px;"></div>
<svg class="i" style="left:534px;top:472px" width="16" height="16" viewBox="0 0 16 16"><rect x="2.5" y="4.0" width="9.5" height="8" fill="#909090"/><rect x="1.5" y="3.0" width="9.5" height="8" fill="#f4f4f4" stroke="#606060" stroke-width="1"/><path d="M6 0V15" stroke="#2050c8" stroke-width="1.400"/><g transform="translate(8,4.5) scale(0.78)"><path d="M0.500 0.500V11L3 8.500L5 13L7 12L5 7.800H8.500Z" fill="#f0e020" stroke="#222" stroke-width="1" stroke-linejoin="round"/></g></svg>
<div style="left:553px;top:469px;width:22px;height:21px;background:#cce4f7;border:1px solid #99c9ef;box-sizing:border-box;border-radius:2px;"></div>
<svg class="i" style="left:556px;top:472px" width="16" height="16" viewBox="0 0 16 16"><rect x="4.5" y="2.0" width="9.5" height="8" fill="#909090"/><rect x="3.5" y="1.0" width="9.5" height="8" fill="#f4f4f4" stroke="#606060" stroke-width="1"/><path d="M0 5H15.500" stroke="#2050c8" stroke-width="1.400"/><g transform="translate(7.5,4.5) scale(0.78)"><path d="M0.500 0.500V11L3 8.500L5 13L7 12L5 7.800H8.500Z" fill="#f0e020" stroke="#222" stroke-width="1" stroke-linejoin="round"/></g></svg>
<svg class="i" style="left:578px;top:484px" width="5" height="3" viewBox="0 0 5 3"><path d="M0 0h5L2.5 3z" fill="#000"/></svg>
<div style="left:587px;top:468px;width:1px;height:24px;background:#d8d8d8;"></div>
<div style="left:1px;top:492px;width:586px;height:1px;background:#b0b0b0;"></div>
<div style="left:1px;top:493px;width:586px;height:1px;background:#f8f8f8;"></div>
<div class="t" style="left:10.5px;top:498px;font-size:12.5px;color:#000;transform:scaleX(0.8);transform-origin:0 0;">(</div>
<div style="left:26px;top:496px;width:49px;height:18px;background:#efefef;border:1px solid #f9f9f9;box-sizing:border-box;"></div>
<div style="left:58px;top:497px;width:1px;height:16px;background:#f6f6f6;"></div>
<div style="left:59px;top:505px;width:14px;height:1px;background:#f6f6f6;"></div>
<svg class="i" style="left:63px;top:500px" width="6" height="3" viewBox="0 0 6 3"><path d="M0 3h6L3 0z" fill="#a6a6a6"/></svg>
<svg class="i" style="left:63px;top:507px" width="6" height="3" viewBox="0 0 6 3"><path d="M0 0h6L3 3z" fill="#a6a6a6"/></svg>
<div class="t" style="left:78px;top:498px;font-size:12px;color:#000;transform:scaleX(1);transform-origin:0 0;">.</div>
<div style="left:94px;top:496px;width:49px;height:18px;background:#efefef;border:1px solid #f9f9f9;box-sizing:border-box;"></div>
<div style="left:126px;top:497px;width:1px;height:16px;background:#f6f6f6;"></div>
<div style="left:127px;top:505px;width:14px;height:1px;background:#f6f6f6;"></div>
<svg class="i" style="left:131px;top:500px" width="6" height="3" viewBox="0 0 6 3"><path d="M0 3h6L3 0z" fill="#a6a6a6"/></svg>
<svg class="i" style="left:131px;top:507px" width="6" height="3" viewBox="0 0 6 3"><path d="M0 0h6L3 3z" fill="#a6a6a6"/></svg>
<div class="t" style="left:151px;top:498px;font-size:12.5px;color:#000;transform:scaleX(0.8);transform-origin:0 0;">)</div>
<div class="t" style="left:158.5px;top:498px;font-size:12.5px;color:#000;transform:scaleX(1);transform-origin:0 0;">-</div>
<div class="t" style="left:167.5px;top:498px;font-size:12.5px;color:#000;transform:scaleX(0.8);transform-origin:0 0;">(</div>
<div style="left:184px;top:496px;width:49px;height:18px;background:#efefef;border:1px solid #f9f9f9;box-sizing:border-box;"></div>
<div style="left:216px;top:497px;width:1px;height:16px;background:#f6f6f6;"></div>
<div style="left:217px;top:505px;width:14px;height:1px;background:#f6f6f6;"></div>
<svg class="i" style="left:221px;top:500px" width="6" height="3" viewBox="0 0 6 3"><path d="M0 3h6L3 0z" fill="#a6a6a6"/></svg>
<svg class="i" style="left:221px;top:507px" width="6" height="3" viewBox="0 0 6 3"><path d="M0 0h6L3 3z" fill="#a6a6a6"/></svg>
<div class="t" style="left:236.5px;top:498px;font-size:12px;color:#000;transform:scaleX(1);transform-origin:0 0;">.</div>
<div style="left:252px;top:496px;width:49px;height:18px;background:#efefef;border:1px solid #f9f9f9;box-sizing:border-box;"></div>
<div style="left:284px;top:497px;width:1px;height:16px;background:#f6f6f6;"></div>
<div style="left:285px;top:505px;width:14px;height:1px;background:#f6f6f6;"></div>
<svg class="i" style="left:289px;top:500px" width="6" height="3" viewBox="0 0 6 3"><path d="M0 3h6L3 0z" fill="#a6a6a6"/></svg>
<svg class="i" style="left:289px;top:507px" width="6" height="3" viewBox="0 0 6 3"><path d="M0 0h6L3 3z" fill="#a6a6a6"/></svg>
<div class="t" style="left:308.5px;top:498px;font-size:12.5px;color:#000;transform:scaleX(0.8);transform-origin:0 0;">)</div>
<div style="left:326px;top:496px;width:48px;height:18px;background:#efefef;border:1px solid #f9f9f9;box-sizing:border-box;"></div>
<div style="left:357px;top:497px;width:1px;height:16px;background:#f6f6f6;"></div>
<div style="left:358px;top:505px;width:14px;height:1px;background:#f6f6f6;"></div>
<svg class="i" style="left:362px;top:500px" width="6" height="3" viewBox="0 0 6 3"><path d="M0 3h6L3 0z" fill="#a6a6a6"/></svg>
<svg class="i" style="left:362px;top:507px" width="6" height="3" viewBox="0 0 6 3"><path d="M0 0h6L3 3z" fill="#a6a6a6"/></svg>
<div class="t" style="left:378px;top:497px;font-size:14px;color:#000;">×</div>
<div style="left:396px;top:496px;width:48px;height:18px;background:#efefef;border:1px solid #f9f9f9;box-sizing:border-box;"></div>
<div style="left:427px;top:497px;width:1px;height:16px;background:#f6f6f6;"></div>
<div style="left:428px;top:505px;width:14px;height:1px;background:#f6f6f6;"></div>
<svg class="i" style="left:432px;top:500px" width="6" height="3" viewBox="0 0 6 3"><path d="M0 3h6L3 0z" fill="#a6a6a6"/></svg>
<svg class="i" style="left:432px;top:507px" width="6" height="3" viewBox="0 0 6 3"><path d="M0 0h6L3 3z" fill="#a6a6a6"/></svg>
<div style="left:453px;top:493px;width:1px;height:26px;background:#b0b0b0;"></div>
<div style="left:1px;top:518px;width:453px;height:1px;background:#8e8e8e;"></div>
<div style="left:454px;top:518px;width:505px;height:1px;background:#e4e4e4;"></div>
<div class="g" style="left:491.3px;top:524px;font-size:12px;color:#000;transform:scaleX(0.955);transform-origin:0 0;">VT3-W4M*/W4G*</div>
<div class="g" style="left:586.2px;top:524px;font-size:12px;color:#000;transform:scaleX(0.94);transform-origin:0 0;">ｸﾞﾚｰ</div>
<div style="left:682px;top:519px;width:1px;height:19px;background:#d0d0d0;"></div>
<div class="t" style="left:686.6px;top:523.5px;font-size:12px;color:#000;transform:scaleX(0.737);transform-origin:0 0;">キーエンス</div>
<div class="g" style="left:734.7px;top:524px;font-size:12px;color:#000;transform:scaleX(0.89);transform-origin:0 0;">KV-7000</div>
<div class="g" style="left:776px;top:524px;font-size:12px;color:#000;transform:scaleX(0.847);transform-origin:0 0;">ｼﾘｰｽﾞ</div>
<div class="g" style="left:806.9px;top:524px;font-size:12px;color:#000;transform:scaleX(0.944);transform-origin:0 0;">(ｼﾘｱﾙ)</div>
<div class="g" style="left:840.8px;top:524px;font-size:12px;color:#000;transform:scaleX(0.905);transform-origin:0 0;">&lt;XYM&gt;</div>
<div style="left:941px;top:519px;width:1px;height:19px;background:#d0d0d0;"></div>
<svg class="i" style="left:945px;top:526px" width="13" height="12" viewBox="0 0 13 12"><g fill="#a0a0a0"><rect x="10" y="9" width="2" height="2"/><rect x="6" y="9" width="2" height="2"/><rect x="2" y="9" width="2" height="2"/><rect x="10" y="5" width="2" height="2"/><rect x="6" y="5" width="2" height="2"/><rect x="10" y="1" width="2" height="2"/></g></svg>
<svg class="i" style="left:0;top:0" width="960" height="540" viewBox="0 0 960 540"><path d="M0.5 540V8Q0.5 0.5 8 0.5H952Q959.5 0.5 959.5 8V532Q959.5 539.5 952 539.5H8Q0.5 539.5 0.5 532" fill="none" stroke="#999" stroke-width="1.300"/><path d="M0 0h9Q0 0 0 9zM960 0h-9Q960 0 960 9z" fill="#e4e4e4"/><path d="M0 540h9Q0 540 0 531zM960 540h-9Q960 540 960 531z" fill="#c4c4c4"/><rect x="670" y="0" width="1.500" height="1" fill="#222"/><rect x="675" y="0" width="1.500" height="1" fill="#222"/></svg>
</div></body></html>
